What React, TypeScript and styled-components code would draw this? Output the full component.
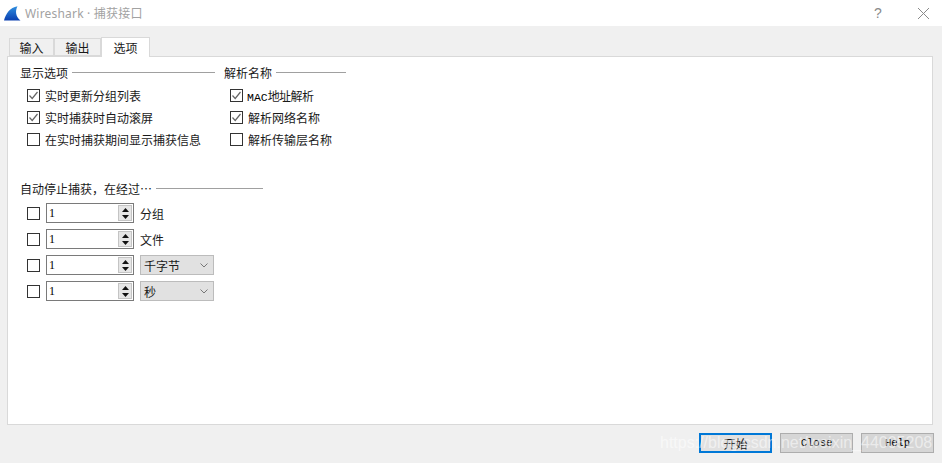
import React from "react";
import styled, { createGlobalStyle } from "styled-components";

const Global = createGlobalStyle`
  html, body { margin: 0; padding: 0; background: #f0f0f0; }
  #root { width: 942px; height: 463px; overflow: hidden; }
  * { box-sizing: border-box; }
`;

const Win = styled.div`
  position: relative;
  width: 942px;
  height: 463px;
  display: flex;
  flex-direction: column;
  background: #f0f0f0;
  font-family: "Noto Sans CJK SC", "Liberation Sans", sans-serif;
  font-size: 12px;
  color: #1a1a1a;
`;

const TitleBar = styled.div`
  height: 26px;
  flex: none;
  background: #fff;
  display: flex;
  align-items: center;
  padding-left: 4px;
  color: #a2a2a2;
  font-size: 12px;
`;
const TitleText = styled.span`
  margin-left: 4px;
  flex: 1;
  letter-spacing: 0.2px;
  font-family: "Noto Sans", "Noto Sans CJK SC", sans-serif;
`;
const TitleBtn = styled.span`
  width: 38px;
  display: flex;
  justify-content: center;
  align-items: center;
  color: #8a8a8a;
`;
const HelpBtn = styled(TitleBtn)`
  width: 52px;
  font-family: "Liberation Sans", sans-serif;
  font-size: 14px;
`;

const Tabs = styled.div`
  flex: none;
  height: 19px;
  margin-top: 11px;
  padding-left: 9px;
  display: flex;
  align-items: flex-end;
  position: relative;
  z-index: 1;
`;
const Tab = styled.div<{ $active?: boolean; $w: number }>`
  width: ${(p) => p.$w}px;
  height: ${(p) => (p.$active ? 20 : 18)}px;
  margin-bottom: ${(p) => (p.$active ? -1 : 0)}px;
  display: flex;
  align-items: center;
  justify-content: center;
  background: ${(p) => (p.$active ? "#fff" : "#f0f0f0")};
  border: 1px solid #d9d9d9;
  border-bottom: ${(p) => (p.$active ? "none" : "1px solid #d9d9d9")};
  font-size: 12px;
`;

const Pane = styled.div`
  height: 369px;
  flex: none;
  margin: 0 9px 0 7px;
  background: #fff;
  border: 1px solid #d9d9d9;
  padding: 7px 12px 0;
`;
const TopGroups = styled.div`
  display: flex;
  gap: 9px;
`;
const Group = styled.div<{ $w: number }>`
  width: ${(p) => p.$w}px;
`;
const Legend = styled.div`
  display: flex;
  align-items: center;
  height: 17px;
  gap: 4px;
  font-size: 12px;
  line-height: 17px;
`;
const Rule = styled.div`
  flex: 1;
  height: 1px;
  background: #a0a0a0;
`;
const CheckList = styled.div<{ $indent: number }>`
  display: flex;
  flex-direction: column;
  padding: 3px 0 0 ${(p) => p.$indent}px;
`;
const CheckRow = styled.div`
  height: 22px;
  display: flex;
  align-items: center;
  gap: 5px;
`;
const Box = styled.div`
  width: 13px;
  height: 13px;
  flex: none;
  border: 1px solid #333;
  background: #fff;
  display: flex;
`;
const TightLabel = styled.span`
  margin-left: -1px;
  letter-spacing: -0.6px;
`;
const Mono = styled.span`
  font-family: "Liberation Mono", monospace;
  font-size: 11.5px;
  letter-spacing: 0;
  color: #000;
`;
const StopGroup = styled.div`
  width: 243px;
  margin-top: 30px;
`;
const StopList = styled.div`
  display: flex;
  flex-direction: column;
  gap: 6px;
  padding: 6px 0 0 7px;
`;
const StopRow = styled.div`
  height: 20px;
  display: flex;
  align-items: center;
`;
const Spin = styled.div`
  width: 88px;
  height: 20px;
  margin: 0 6px;
  border: 1px solid #7a7a7a;
  display: flex;
  align-items: center;
  justify-content: space-between;
  padding: 1px 1px 1px 2px;
  font-family: "Liberation Serif", serif;
  font-size: 12px;
  color: #000;
`;
const SpinBtns = styled.div`
  width: 14px;
  height: 16px;
  display: flex;
  flex-direction: column;
  background: #e6e6e6;
  border: 1px solid #c4c4c4;
`;
const SpinBtn = styled.div`
  flex: 1;
  display: flex;
  align-items: center;
  justify-content: center;
`;
const Combo = styled.div`
  width: 74px;
  height: 20px;
  border: 1px solid #bcbcbc;
  background: #e1e1e1;
  display: flex;
  align-items: center;
  justify-content: space-between;
  padding: 0 5px 0 3px;
`;

const Footer = styled.div`
  flex: 1;
  display: flex;
  justify-content: flex-end;
  align-items: flex-start;
  gap: 8px;
  padding: 8px 8px 0 0;
`;
const Btn = styled.div<{ $primary?: boolean }>`
  width: 73px;
  height: 20px;
  display: flex;
  align-items: center;
  justify-content: center;
  background: ${(p) => (p.$primary ? "#e1e1e1" : "#d6d6d6")};
  border: ${(p) => (p.$primary ? "2px solid #0078d7" : "1px solid #adadad")};
`;
const BtnMono = styled.span`
  font-family: "Liberation Mono", monospace;
  font-size: 10.5px;
  color: #000;
`;
const Watermark = styled.div`
  position: absolute;
  left: 660px;
  top: 432px;
  font-family: "Liberation Sans", sans-serif;
  font-size: 16px;
  line-height: 22px;
  color: rgba(255, 255, 255, 0.55);
  white-space: nowrap;
`;

const Shark = () => (
  <svg width="17" height="15" viewBox="0 0 17 15">
    <defs>
      <linearGradient id="fin" x1="0" y1="0" x2="0" y2="1">
        <stop offset="0" stopColor="#2f8fe0" />
        <stop offset="1" stopColor="#0b3fb0" />
      </linearGradient>
    </defs>
    <path d="M0 14.5C1.5 8 6 1.5 13.5 0.3 11 5 11.5 10.5 16.5 14.5Z" fill="url(#fin)" />
  </svg>
);
const Close = () => (
  <svg width="13" height="13" viewBox="0 0 13 13">
    <path d="M1 1L12 12M12 1L1 12" stroke="#8a8a8a" strokeWidth="1" fill="none" />
  </svg>
);
const Check = () => (
  <svg width="11" height="11" viewBox="0 0 11 11">
    <path d="M1.5 5.5L4.2 8.5 9.5 2" stroke="#666" strokeWidth="1.2" fill="none" />
  </svg>
);
const Up = () => (
  <svg width="7" height="4" viewBox="0 0 7 4">
    <path d="M3.5 0L7 4H0Z" fill="#111" />
  </svg>
);
const Down = () => (
  <svg width="7" height="4" viewBox="0 0 7 4">
    <path d="M0 0H7L3.5 4Z" fill="#111" />
  </svg>
);
const Chevron = () => (
  <svg width="8" height="5" viewBox="0 0 8 5">
    <path d="M0.5 0.5L4 4 7.5 0.5" stroke="#777" strokeWidth="1" fill="none" />
  </svg>
);

const Spinner = () => (
  <Spin>
    <span>1</span>
    <SpinBtns>
      <SpinBtn><Up /></SpinBtn>
      <SpinBtn><Down /></SpinBtn>
    </SpinBtns>
  </Spin>
);

const Option = ({ on, children }: { on?: boolean; children: React.ReactNode }) => (
  <CheckRow>
    <Box>{on && <Check />}</Box>
    {children}
  </CheckRow>
);

export default function App() {
  return (
    <Win>
      <Global />
      <TitleBar>
        <Shark />
        <TitleText>Wireshark · 捕获接口</TitleText>
        <HelpBtn>?</HelpBtn>
        <TitleBtn><Close /></TitleBtn>
      </TitleBar>
      <Tabs>
        <Tab $w={45}>输入</Tab>
        <Tab $w={47}>输出</Tab>
        <Tab $w={49} $active>选项</Tab>
      </Tabs>
      <Pane>
        <TopGroups>
          <Group $w={195}>
            <Legend>显示选项<Rule /></Legend>
            <CheckList $indent={7}>
              <Option on><span>实时更新分组列表</span></Option>
              <Option on><span>实时捕获时自动滚屏</span></Option>
              <Option><span>在实时捕获期间显示捕获信息</span></Option>
            </CheckList>
          </Group>
          <Group $w={122}>
            <Legend>解析名称<Rule /></Legend>
            <CheckList $indent={6}>
              <Option on><TightLabel><Mono>MAC</Mono>地址解析</TightLabel></Option>
              <Option on><span>解析网络名称</span></Option>
              <Option><span>解析传输层名称</span></Option>
            </CheckList>
          </Group>
        </TopGroups>
        <StopGroup>
          <Legend>自动停止捕获，在经过…<Rule /></Legend>
          <StopList>
            <StopRow><Box /><Spinner /><span>分组</span></StopRow>
            <StopRow><Box /><Spinner /><span>文件</span></StopRow>
            <StopRow><Box /><Spinner /><Combo><span>千字节</span><Chevron /></Combo></StopRow>
            <StopRow><Box /><Spinner /><Combo><span>秒</span><Chevron /></Combo></StopRow>
          </StopList>
        </StopGroup>
      </Pane>
      <Footer>
        <Btn $primary>开始</Btn>
        <Btn><BtnMono>Close</BtnMono></Btn>
        <Btn><BtnMono>Help</BtnMono></Btn>
      </Footer>
      <Watermark>https://blog.csdn.net/weixin_44005208</Watermark>
    </Win>
  );
}
